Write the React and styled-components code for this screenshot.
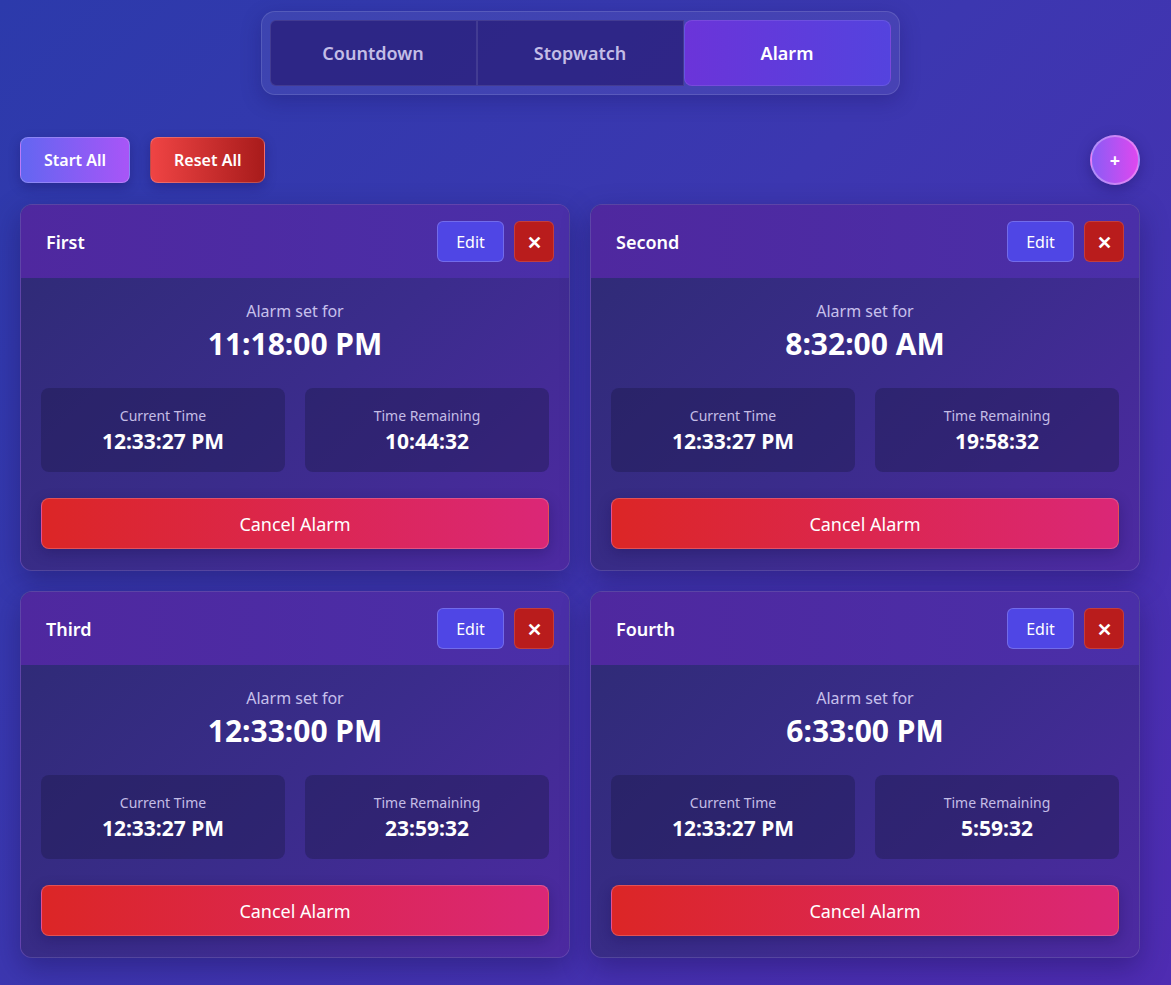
import React from 'react';
import styled, { createGlobalStyle } from 'styled-components';

const GlobalStyle = createGlobalStyle`
  html, body {
    margin: 0;
    padding: 0;
  }
  body {
    min-height: 985px;
    font-family: "Noto Sans", "Open Sans", sans-serif;
    background: linear-gradient(135deg, #2c3aab 0%, #3c37b0 45%, #4f2cb2 100%);
    color: #fff;
  }
`;

const Page = styled.div`
  width: 1120px;
  padding: 11px 31px 28px 20px;
  display: flex;
  flex-direction: column;
`;

const TabBar = styled.div`
  align-self: center;
  display: flex;
  padding: 8px;
  border-radius: 14px;
  background: rgba(255, 255, 255, 0.06);
  border: 1px solid rgba(255, 255, 255, 0.12);
  box-shadow: 0 6px 20px rgba(20, 10, 80, 0.25);
`;

const Tab = styled.button`
  width: 207px;
  height: 66px;
  border: 1px solid rgba(255, 255, 255, 0.1);
  border-radius: ${({ $active }) => ($active ? '8px' : '0')};
  background: ${({ $active }) =>
    $active ? 'linear-gradient(90deg, #6b34d9, #5443de)' : 'rgba(40, 28, 120, 0.75)'};
  color: ${({ $active }) => ($active ? '#ffffff' : '#c3bde6')};
  font-family: inherit;
  font-size: 18px;
  font-weight: 600;
  cursor: pointer;
  &:first-child {
    border-radius: 6px 0 0 6px;
  }
`;

const Toolbar = styled.div`
  display: flex;
  align-items: center;
  gap: 20px;
  margin-top: 40px;
  height: 50px;
`;

const ActionButton = styled.button`
  height: 46px;
  padding: 0 ${({ $pad }) => $pad}px;
  border-radius: 8px;
  border: 1px solid rgba(255, 255, 255, 0.22);
  background: ${({ $bg }) => $bg};
  color: #fff;
  font-family: inherit;
  font-size: 16px;
  font-weight: 600;
  box-shadow: 0 4px 12px rgba(20, 10, 80, 0.3);
`;

const AddButton = styled.button`
  margin-left: auto;
  width: 50px;
  height: 50px;
  border-radius: 50%;
  border: 2px solid rgba(255, 255, 255, 0.3);
  background: linear-gradient(90deg, #8a5cf6, #de48ef);
  color: #fff;
  font-family: inherit;
  font-size: 18px;
  font-weight: 700;
  box-shadow: 0 4px 14px rgba(20, 10, 80, 0.35);
`;

const Grid = styled.div`
  margin-top: 19px;
  display: grid;
  grid-template-columns: 1fr 1fr;
  gap: 20px;
`;

const Card = styled.div`
  border-radius: 12px;
  overflow: hidden;
  border: 1px solid rgba(255, 255, 255, 0.12);
  background: linear-gradient(135deg, #3a2d8e, #4f2aa4);
  box-shadow: 0 10px 28px rgba(20, 10, 70, 0.35);
`;

const CardHeader = styled.div`
  height: 73px;
  display: flex;
  align-items: center;
  gap: 10px;
  padding: 0 15px 0 25px;
  background: linear-gradient(90deg, #4f289f, #4a2fa8);
`;

const CardTitle = styled.h3`
  margin: 0;
  flex: 1;
  font-size: 18px;
  font-weight: 600;
  color: #fff;
`;

const EditButton = styled.button`
  width: 67px;
  height: 41px;
  border-radius: 6px;
  border: 1px solid rgba(255, 255, 255, 0.2);
  background: #4f46e5;
  color: #fff;
  font-family: inherit;
  font-size: 16px;
`;

const CloseButton = styled.button`
  width: 40px;
  height: 41px;
  border-radius: 6px;
  border: 1px solid rgba(255, 255, 255, 0.15);
  background: #b91c1c;
  color: #fff;
  font-family: inherit;
  font-size: 18px;
  font-weight: 700;
  display: flex;
  align-items: center;
  justify-content: center;
  padding: 0;
`;

const CardBody = styled.div`
  padding: 22px 20px 21px;
  display: flex;
  flex-direction: column;
  align-items: stretch;
  background: linear-gradient(135deg, #302b78 0%, #3b2c8c 50%, #4d2aa2 100%);
`;

const SetLabel = styled.div`
  text-align: center;
  font-size: 16px;
  color: #c7c0ec;
  line-height: 22px;
`;

const SetTime = styled.div`
  text-align: center;
  font-size: 30px;
  font-weight: 700;
  line-height: 40px;
  margin-top: 2px;
`;

const Stats = styled.div`
  margin-top: 24px;
  display: grid;
  grid-template-columns: 1fr 1fr;
  gap: 20px;
`;

const StatBox = styled.div`
  height: 84px;
  border-radius: 8px;
  background: rgba(30, 27, 80, 0.45);
  display: flex;
  flex-direction: column;
  align-items: center;
  justify-content: center;
`;

const StatLabel = styled.div`
  font-size: 14px;
  color: #c4bde6;
  line-height: 20px;
`;

const StatValue = styled.div`
  font-size: 21px;
  font-weight: 700;
  line-height: 28px;
  margin-top: 1px;
`;

const CancelButton = styled.button`
  margin-top: 26px;
  height: 51px;
  border-radius: 8px;
  border: 1px solid rgba(255, 255, 255, 0.2);
  background: linear-gradient(90deg, #dc2626, #db2777);
  color: #fff;
  font-family: inherit;
  font-size: 18px;
  box-shadow: 0 4px 14px rgba(20, 10, 70, 0.3);
`;

const alarms = [
  { name: 'First', time: '11:18:00 PM', remaining: '10:44:32' },
  { name: 'Second', time: '8:32:00 AM', remaining: '19:58:32' },
  { name: 'Third', time: '12:33:00 PM', remaining: '23:59:32' },
  { name: 'Fourth', time: '6:33:00 PM', remaining: '5:59:32' },
];

function AlarmCard({ alarm }) {
  return (
    <Card>
      <CardHeader>
        <CardTitle>{alarm.name}</CardTitle>
        <EditButton>Edit</EditButton>
        <CloseButton>✕</CloseButton>
      </CardHeader>
      <CardBody>
        <SetLabel>Alarm set for</SetLabel>
        <SetTime>{alarm.time}</SetTime>
        <Stats>
          <StatBox>
            <StatLabel>Current Time</StatLabel>
            <StatValue>12:33:27 PM</StatValue>
          </StatBox>
          <StatBox>
            <StatLabel>Time Remaining</StatLabel>
            <StatValue>{alarm.remaining}</StatValue>
          </StatBox>
        </Stats>
        <CancelButton>Cancel Alarm</CancelButton>
      </CardBody>
    </Card>
  );
}

export default function App() {
  return (
    <>
      <GlobalStyle />
      <Page>
        <TabBar>
          <Tab>Countdown</Tab>
          <Tab>Stopwatch</Tab>
          <Tab $active>Alarm</Tab>
        </TabBar>
        <Toolbar>
          <ActionButton $pad={23} $bg="linear-gradient(90deg, #6366f1, #a855f7)">Start All</ActionButton>
          <ActionButton $pad={23} $bg="linear-gradient(90deg, #ef4444, #a81b1b)">Reset All</ActionButton>
          <AddButton>+</AddButton>
        </Toolbar>
        <Grid>
          {alarms.map((a) => (
            <AlarmCard key={a.name} alarm={a} />
          ))}
        </Grid>
      </Page>
    </>
  );
}
